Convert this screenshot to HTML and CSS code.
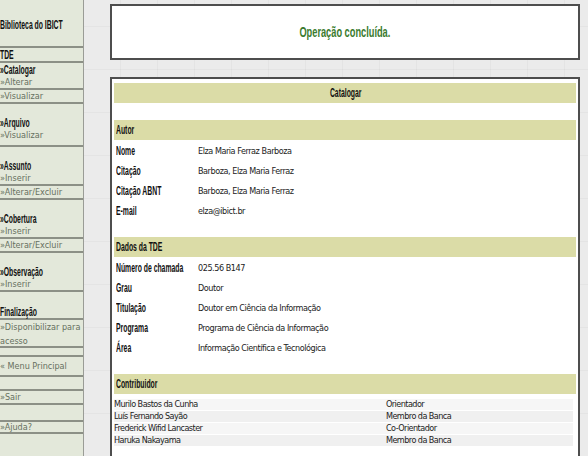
FILE: index.html
```html
<!DOCTYPE html>
<html lang="pt">
<head>
<meta charset="utf-8">
<title>Catalogar</title>
<link rel="stylesheet" href="styles.css">
</head>
<body>
<div class="page">
  <nav class="sidebar">
    <div class="brand"><span class="n">Biblioteca do IBICT</span></div>
    <div class="sec"><span class="n">TDE</span></div>
    <div class="grp g1">
      <div class="head"><span class="n">»Catalogar</span></div>
      <a class="lnk">»Alterar</a>
      <a class="lnk">»Visualizar</a>
    </div>
    <div class="grp">
      <div class="head"><span class="n">»Arquivo</span></div>
      <a class="lnk tall">»Visualizar</a>
    </div>
    <div class="grp">
      <div class="head"><span class="n">»Assunto</span></div>
      <a class="lnk">»Inserir</a>
      <a class="lnk">»Alterar/Excluir</a>
    </div>
    <div class="grp">
      <div class="head"><span class="n">»Cobertura</span></div>
      <a class="lnk">»Inserir</a>
      <a class="lnk">»Alterar/Excluir</a>
    </div>
    <div class="grp">
      <div class="head"><span class="n">»Observação</span></div>
      <a class="lnk">»Inserir</a>
    </div>
    <div class="grp fin">
      <div class="head"><span class="n">Finalização</span></div>
      <a class="lnk"><span class="nw">»Disponibilizar para</span> acesso</a>
    </div>
    <a class="solo menu">« Menu Principal</a>
    <a class="solo sair">»Sair</a>
    <a class="solo ajuda">»Ajuda?</a>
  </nav>
  <main class="content">
    <div class="msg"><span class="n c">Operação concluída.</span></div>
    <div class="panel">
      <div class="bar center"><span class="n c">Catalogar</span></div>

      <div class="bar sect"><span class="n">Autor</span></div>
      <div class="rows">
        <div class="lbl"><span class="n">Nome</span></div><div class="val">Elza Maria Ferraz Barboza</div>
        <div class="lbl"><span class="n">Citação</span></div><div class="val">Barboza, Elza Maria Ferraz</div>
        <div class="lbl"><span class="n">Citação ABNT</span></div><div class="val">Barboza, Elza Maria Ferraz</div>
        <div class="lbl"><span class="n">E-mail</span></div><div class="val">elza@ibict.br</div>
      </div>

      <div class="bar sect"><span class="n">Dados da TDE</span></div>
      <div class="rows">
        <div class="lbl"><span class="n">Número de chamada</span></div><div class="val">025.56 B147</div>
        <div class="lbl"><span class="n">Grau</span></div><div class="val">Doutor</div>
        <div class="lbl"><span class="n">Titulação</span></div><div class="val">Doutor em Ciência da Informação</div>
        <div class="lbl"><span class="n">Programa</span></div><div class="val">Programa de Ciência da Informação</div>
        <div class="lbl"><span class="n">Área</span></div><div class="val">Informação Científica e Tecnológica</div>
      </div>

      <div class="bar sect"><span class="n">Contribuidor</span></div>
      <div class="contrib">
        <div class="crow"><span>Murilo Bastos da Cunha</span><span>Orientador</span></div>
        <div class="crow"><span>Luís Fernando Sayão</span><span>Membro da Banca</span></div>
        <div class="crow"><span>Frederick Wifid Lancaster</span><span>Co-Orientador</span></div>
        <div class="crow"><span>Haruka Nakayama</span><span>Membro da Banca</span></div>
      </div>
    </div>
  </main>
</div>
</body>
</html>
```

FILE: styles.css
```css
html, body {
  margin: 0;
  padding: 0;
}
body {
  background: #ebebeb;
  font-family: "Liberation Sans", sans-serif;
  width: 588px;
  height: 456px;
  overflow: hidden;
}
.page {
  display: flex;
  height: 456px;
}

/* condensed bold text */
.n {
  display: inline-block;
  white-space: nowrap;
  line-height: 1;
  font-family: "Liberation Sans", sans-serif;
  font-weight: bold;
  font-size: 12px;
  color: #111;
  transform: scaleX(0.57);
  transform-origin: left center;
}
.n.c {
  transform-origin: center center;
}
.nw {
  white-space: nowrap;
}

/* sidebar */
.sidebar {
  width: 83px;
  flex: none;
  background: #e3e8da;
  border-right: 1px solid #9a9c96;
  display: flex;
  flex-direction: column;
}
.brand {
  height: 46px;
  display: flex;
  align-items: center;
  padding-top: 3px;
  box-sizing: border-box;
  border-bottom: 2px solid #8c9086;
}
.brand {
  height: 48px;
}
.sec {
  height: 13px;
  display: flex;
  align-items: center;
  border-bottom: 2px solid #8c9086;
}
.grp {
  display: flex;
  flex-direction: column;
  margin-top: 12px;
}
.g1 {
  margin-top: 0;
}
.head {
  height: 13px;
  display: flex;
  align-items: center;
}
.lnk, .solo {
  display: block;
  font-family: "DejaVu Sans", sans-serif;
  font-stretch: condensed;
  font-size: 9px;
  color: #667060;
  line-height: 12px;
  height: 12px;
  border-bottom: 2px solid #8c9086;
}
.lnk.tall {
  height: 16px;
}
.fin {
  margin-top: 13px;
}
.fin .head {
  height: 13px;
  border-bottom: 2px solid #8c9086;
}
.fin .lnk {
  height: 26px;
  line-height: 14px;
}
.solo {
  border-top: 2px solid #8c9086;
}
.menu {
  margin-top: 7px;
  height: 18px;
  line-height: 18px;
}
.sair {
  margin-top: 12px;
  height: 12px;
  line-height: 13px;
}
.ajuda {
  margin-top: 15px;
  height: 10px;
  line-height: 10px;
}

/* content */
.content {
  flex: 1;
  padding: 4px 0 0 26px;
  display: flex;
  flex-direction: column;
  gap: 17px;
  background-image:
    repeating-linear-gradient(90deg, transparent 0 36px, rgba(0,0,0,0.03) 36px 37px),
    repeating-linear-gradient(0deg, transparent 0 42px, rgba(0,0,0,0.03) 42px 43px);
}
.msg {
  flex: none;
  width: 466px;
  height: 52px;
  background: #fff;
  border: 2px solid #4e4e4e;
  display: flex;
  align-items: center;
  justify-content: center;
}
.msg .n {
  font-size: 14px;
  color: #3b7b2e;
  transform: scaleX(0.66);
}
.panel {
  flex: none;
  width: 462px;
  background: #fff;
  border: 2px solid #4e4e4e;
  padding: 4px 2px 20px 2px;
}
.bar {
  background: #dbdca7;
  height: 20px;
  display: flex;
  align-items: center;
  padding-left: 2px;
}
.bar.center {
  justify-content: center;
}
.bar.sect {
  margin-top: 17px;
}
.rows + .bar.sect {
  margin-top: 16px;
}
.rows {
  display: grid;
  grid-template-columns: 84px 1fr;
  grid-auto-rows: 20px;
  padding-top: 1px;
  align-items: center;
}
.lbl {
  padding-left: 2px;
  height: 20px;
  display: flex;
  align-items: center;
}
.val {
  font-family: "DejaVu Sans", sans-serif;
  font-stretch: condensed;
  font-size: 9px;
  letter-spacing: -0.45px;
  color: #222;
}
.contrib {
  display: flex;
  flex-direction: column;
  padding-top: 5px;
  width: 459px;
}
.crow {
  display: grid;
  grid-template-columns: 272px 1fr;
  height: 11px;
  line-height: 11px;
  background: #f6f6f6;
  border-bottom: 1px solid #fff;
  font-family: "DejaVu Sans", sans-serif;
  font-stretch: condensed;
  font-size: 9px;
  letter-spacing: -0.55px;
  color: #222;
}
.crow:nth-child(even) {
  background: #f0f0f0;
}
```
